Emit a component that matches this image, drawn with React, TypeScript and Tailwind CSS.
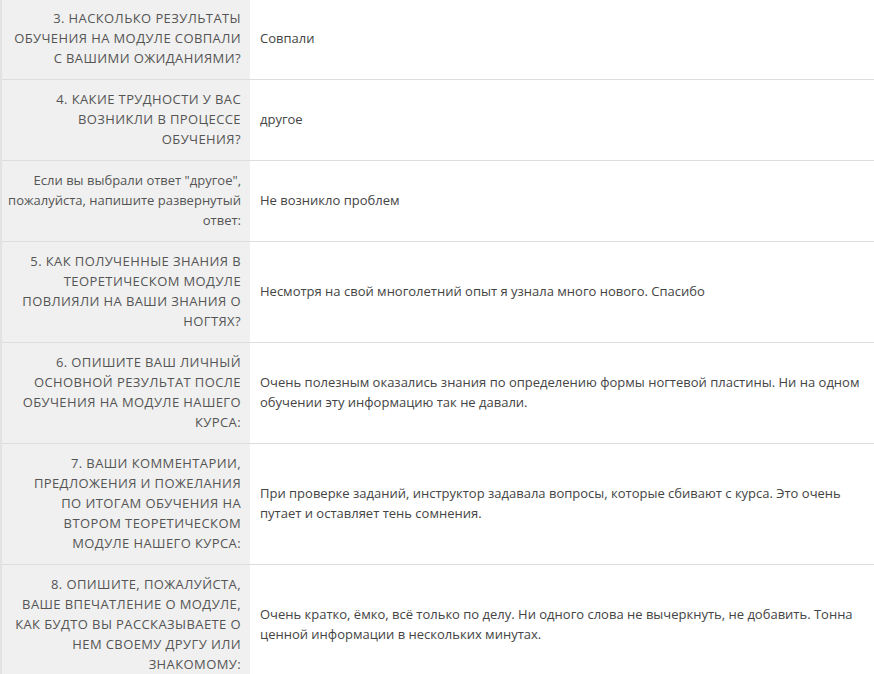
type Row = {
  lines: string[];
  answer: string;
  upper?: boolean;
};

const rows: Row[] = [
  {
    lines: ["3. Насколько результаты", "обучения на модуле совпали", "с вашими ожиданиями?"],
    answer: "Совпали",
    upper: true,
  },
  {
    lines: ["4. Какие трудности у вас", "возникли в процессе", "обучения?"],
    answer: "другое",
    upper: true,
  },
  {
    lines: ['Если вы выбрали ответ "другое",', "пожалуйста, напишите развернутый", "ответ:"],
    answer: "Не возникло проблем",
  },
  {
    lines: ["5. Как полученные знания в", "теоретическом модуле", "повлияли на ваши знания о", "ногтях?"],
    answer: "Несмотря на свой многолетний опыт я узнала много нового. Спасибо",
    upper: true,
  },
  {
    lines: ["6. Опишите ваш личный", "основной результат после", "обучения на модуле нашего", "курса:"],
    answer:
      "Очень полезным оказались знания по определению формы ногтевой пластины. Ни на одном обучении эту информацию так не давали.",
    upper: true,
  },
  {
    lines: [
      "7. Ваши комментарии,",
      "предложения и пожелания",
      "по итогам обучения на",
      "втором теоретическом",
      "модуле нашего курса:",
    ],
    answer:
      "При проверке заданий, инструктор задавала вопросы, которые сбивают с курса. Это очень путает и оставляет тень сомнения.",
    upper: true,
  },
  {
    lines: [
      "8. Опишите, пожалуйста,",
      "ваше впечатление о модуле,",
      "как будто вы рассказываете о",
      "нем своему другу или",
      "знакомому:",
    ],
    answer:
      "Очень кратко, ёмко, всё только по делу. Ни одного слова не вычеркнуть, не добавить. Тонна ценной информации в нескольких минутах.",
    upper: true,
  },
];

export default function App() {
  return (
    <div className="h-[674px] w-[874px] overflow-hidden bg-white font-['Open_Sans',sans-serif] text-[13px] leading-[20px]">
      <div className="-mt-[2px] border-l-2 border-[#e2e2e2]">
        {rows.map((row) => (
          <div key={row.lines[0]} className="flex border-t border-[#dddddd]">
            <div
              className={`w-[248px] shrink-0 bg-[#f0f0f0] pt-[9px] pb-[11px] pr-[9px] text-right text-[#555555] ${
                row.upper ? "uppercase tracking-[0.4px]" : ""
              }`}
            >
              {row.lines.map((line) => (
                <div key={line} className="whitespace-nowrap">
                  {line}
                </div>
              ))}
            </div>
            <div className="flex flex-1 items-center px-[10px] pt-[9px] pb-[11px] text-[#444444]">
              {row.answer}
            </div>
          </div>
        ))}
      </div>
    </div>
  );
}
